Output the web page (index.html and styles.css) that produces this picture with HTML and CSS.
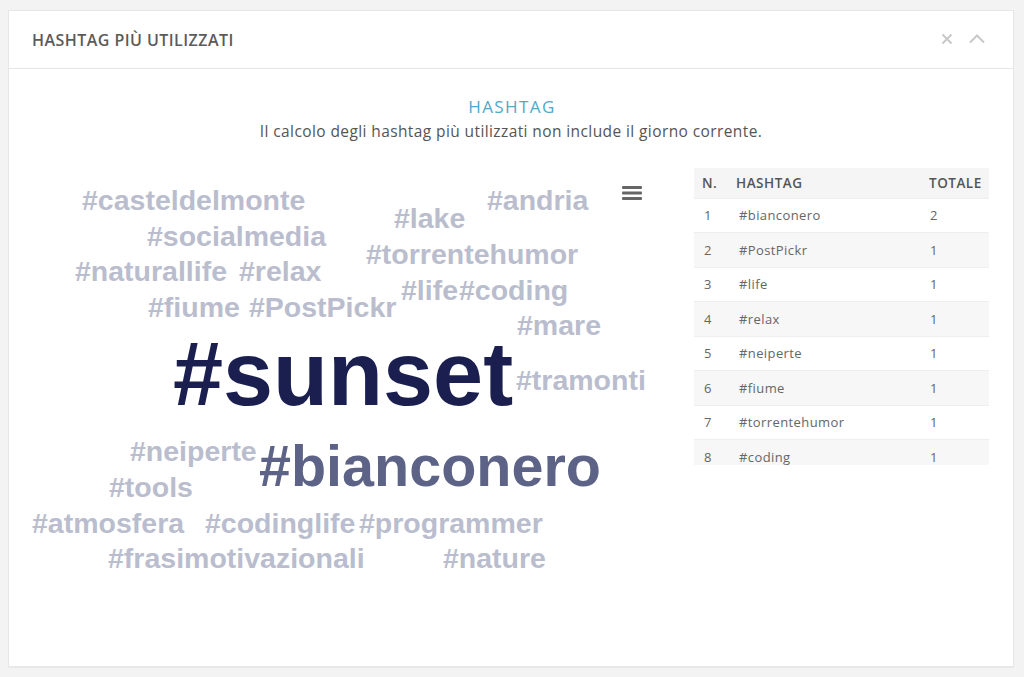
FILE: index.html
```html
<!DOCTYPE html>
<html lang="it">
<head>
<meta charset="utf-8">
<title>Hashtag più utilizzati</title>
<link rel="stylesheet" href="styles.css">
</head>
<body>
<div class="card">
  <div class="card-header">
    <h2 class="card-title">HASHTAG PIÙ UTILIZZATI</h2>
    <div class="card-tools">
      <svg class="tool" width="14" height="14" viewBox="0 0 14 14"><path d="M2.5 2.5 L11.5 11.5 M11.5 2.5 L2.5 11.5" stroke="#c9c9c9" stroke-width="2" fill="none"/></svg>
      <svg class="tool" width="18" height="14" viewBox="0 0 18 14"><path d="M2 10.5 L9 3.5 L16 10.5" stroke="#c9c9c9" stroke-width="2" fill="none"/></svg>
    </div>
  </div>
  <div class="card-body">
    <div class="intro">
      <div class="intro-title">HASHTAG</div>
      <div class="intro-sub">Il calcolo degli hashtag più utilizzati non include il giorno corrente.</div>
    </div>
    <div class="content">
      <div class="cloud">
        <span class="w" style="left:73px;top:26px">#casteldelmonte</span>
        <span class="w" style="left:138px;top:62px">#socialmedia</span>
        <span class="w" style="left:66px;top:97px">#naturallife</span>
        <span class="w" style="left:230px;top:97px">#relax</span>
        <span class="w" style="left:139px;top:133px">#fiume</span>
        <span class="w" style="left:240px;top:133px">#PostPickr</span>
        <span class="w" style="left:385px;top:44px">#lake</span>
        <span class="w" style="left:478px;top:26px">#andria</span>
        <span class="w" style="left:357px;top:80px">#torrentehumor</span>
        <span class="w" style="left:392px;top:116px">#life</span>
        <span class="w" style="left:450px;top:116px">#coding</span>
        <span class="w" style="left:508px;top:151px">#mare</span>
        <span class="w big" style="left:164px;top:169px">#sunset</span>
        <span class="w" style="left:507px;top:206px">#tramonti</span>
        <span class="w" style="left:121px;top:277px">#neiperte</span>
        <span class="w mid" style="left:250px;top:278px">#bianconero</span>
        <span class="w" style="left:100px;top:313px">#tools</span>
        <span class="w" style="left:23px;top:349px">#atmosfera</span>
        <span class="w" style="left:196px;top:349px">#codinglife</span>
        <span class="w" style="left:350px;top:349px">#programmer</span>
        <span class="w" style="left:99px;top:384px">#frasimotivazionali</span>
        <span class="w" style="left:434px;top:384px">#nature</span>
        <button class="menu" aria-label="menu">
          <svg width="20" height="16" viewBox="0 0 20 16"><rect x="0" y="1" width="20" height="3" rx="1" fill="#666"/><rect x="0" y="6.5" width="20" height="3" rx="1" fill="#666"/><rect x="0" y="12" width="20" height="3" rx="1" fill="#666"/></svg>
        </button>
      </div>
      <div class="table-wrap">
        <table class="tbl">
          <thead>
            <tr><th class="c-n">N.</th><th class="c-h">HASHTAG</th><th class="c-t">TOTALE</th></tr>
          </thead>
          <tbody>
            <tr><td class="c-n">1</td><td class="c-h">#bianconero</td><td class="c-t">2</td></tr>
            <tr><td class="c-n">2</td><td class="c-h">#PostPickr</td><td class="c-t">1</td></tr>
            <tr><td class="c-n">3</td><td class="c-h">#life</td><td class="c-t">1</td></tr>
            <tr><td class="c-n">4</td><td class="c-h">#relax</td><td class="c-t">1</td></tr>
            <tr><td class="c-n">5</td><td class="c-h">#neiperte</td><td class="c-t">1</td></tr>
            <tr><td class="c-n">6</td><td class="c-h">#fiume</td><td class="c-t">1</td></tr>
            <tr><td class="c-n">7</td><td class="c-h">#torrentehumor</td><td class="c-t">1</td></tr>
            <tr><td class="c-n">8</td><td class="c-h">#coding</td><td class="c-t">1</td></tr>
          </tbody>
        </table>
      </div>
    </div>
  </div>
</div>
</body>
</html>
```
FILE: styles.css
```css
* { box-sizing: border-box; }
html, body { margin: 0; padding: 0; }
body {
  background: #f3f3f3;
  padding: 10px 10px 9px 8px;
  font-family: "Open Sans", "Lato", sans-serif;
  color: #555;
}
.card {
  background: #fff;
  border: 1px solid #e6e6e6;
  border-bottom: 2px solid #e8e8e8;
  height: 658px;
  display: flex;
  flex-direction: column;
}
.card-header {
  height: 58px;
  border-bottom: 1px solid #e6e6e6;
  display: flex;
  align-items: center;
  justify-content: space-between;
  padding: 0 27px 0 23px;
}
.card-title {
  margin: 0;
  font-size: 16px;
  font-weight: 600;
  color: #5b5b5b;
  letter-spacing: 0.45px;
}
.card-tools {
  display: flex;
  align-items: center;
  gap: 14px;
  margin-top: -2px;
}
.tool { display: block; }
.card-body {
  flex: 1;
  display: flex;
  flex-direction: column;
}
.intro {
  padding-top: 26px;
  text-align: center;
}
.intro-title {
  font-size: 17px;
  line-height: 23px;
  color: #4fa9c9;
  margin-left: 2px;
  letter-spacing: 1.4px;
}
.intro-sub {
  font-size: 15.5px;
  line-height: 22px;
  color: #555;
  margin-top: 2px;
  letter-spacing: 0.4px;
}
.content {
  display: flex;
  margin-top: 18px;
}
.cloud {
  position: relative;
  width: 672px;
  height: 440px;
  flex: none;
  font-family: "Liberation Sans", Arial, sans-serif;
  font-weight: 700;
}
.w {
  position: absolute;
  font-size: 28.5px;
  line-height: 1;
  color: #babdcd;
  white-space: nowrap;
}
.w.big {
  font-size: 90px;
  color: #1b1f4f;
}
.w.mid {
  font-size: 57.5px;
  color: #5d6386;
}
.menu {
  position: absolute;
  left: 613px;
  top: 25px;
  border: 0;
  padding: 0;
  background: transparent;
  width: 20px;
  height: 16px;
}
.menu svg { display: block; }
.table-wrap {
  margin-left: 13px;
  margin-top: 8px;
  width: 295px;
  height: 297px;
  overflow: hidden;
}
.tbl {
  width: 100%;
  border-collapse: collapse;
  font-size: 13px;
  letter-spacing: 0.4px;
}
.tbl th {
  background: #f5f5f5;
  height: 30px;
  text-align: left;
  font-weight: 600;
  font-size: 13.5px;
  letter-spacing: 0.5px;
  color: #555;
  padding: 0;
}
.tbl td {
  height: 34.5px;
  padding: 0;
  color: #666;
  border-top: 1px solid #eeeeee;
}
.tbl tbody tr:nth-child(even) td { background: #f7f7f7; }
.c-n { width: 42px; padding-left: 8px !important; }
.tbl td.c-n { padding-left: 10px !important; }
.c-h { width: 193px; padding-left: 0; }
.tbl td.c-h { padding-left: 3px !important; }
.c-t { padding-left: 0; }
.tbl td.c-t { padding-left: 1px !important; }
```
